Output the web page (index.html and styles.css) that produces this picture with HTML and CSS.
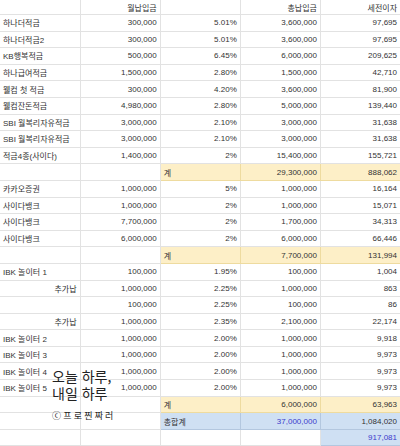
FILE: index.html
```html
<!DOCTYPE html>
<html lang="ko">
<head>
  <meta charset="UTF-8" />
  <meta name="viewport" content="width=device-width, initial-scale=1.0" />
  <title>적금 정리</title>
  <link rel="stylesheet" href="styles.css">
</head>
<body>
  <div class="sheet">
    <table>
      <tr class="head">
        <td></td><td class="num">월납입금</td><td></td><td class="num">총납입금</td><td class="num">세전이자</td>
      </tr>
      <tr><td>하나더적금</td><td class="num">300,000</td><td class="num">5.01%</td><td class="num">3,600,000</td><td class="num">97,695</td></tr>
      <tr><td>하나더적금2</td><td class="num">300,000</td><td class="num">5.01%</td><td class="num">3,600,000</td><td class="num">97,695</td></tr>
      <tr><td>KB행복적금</td><td class="num">500,000</td><td class="num">6.45%</td><td class="num">6,000,000</td><td class="num">209,625</td></tr>
      <tr><td>하나급여적금</td><td class="num">1,500,000</td><td class="num">2.80%</td><td class="num">1,500,000</td><td class="num">42,710</td></tr>
      <tr><td>웰컴 첫 적금</td><td class="num">300,000</td><td class="num">4.20%</td><td class="num">3,600,000</td><td class="num">81,900</td></tr>
      <tr><td>웰컴잔돈적금</td><td class="num">4,980,000</td><td class="num">2.80%</td><td class="num">5,000,000</td><td class="num">139,440</td></tr>
      <tr><td>SBI 월복리자유적금</td><td class="num">3,000,000</td><td class="num">2.10%</td><td class="num">3,000,000</td><td class="num">31,638</td></tr>
      <tr><td>SBI 월복리자유적금</td><td class="num">3,000,000</td><td class="num">2.10%</td><td class="num">3,000,000</td><td class="num">31,638</td></tr>
      <tr><td>적금4종(사이다)</td><td class="num">1,400,000</td><td class="num">2%</td><td class="num">15,400,000</td><td class="num">155,721</td></tr>
      <tr class="sum"><td></td><td></td><td class="yellow">계</td><td class="yellow num">29,300,000</td><td class="yellow num">888,062</td></tr>
      <tr><td>카카오증권</td><td class="num">1,000,000</td><td class="num">5%</td><td class="num">1,000,000</td><td class="num">16,164</td></tr>
      <tr><td>사이다뱅크</td><td class="num">1,000,000</td><td class="num">2%</td><td class="num">1,000,000</td><td class="num">15,071</td></tr>
      <tr><td>사이다뱅크</td><td class="num">7,700,000</td><td class="num">2%</td><td class="num">1,700,000</td><td class="num">34,313</td></tr>
      <tr><td>사이다뱅크</td><td class="num">6,000,000</td><td class="num">2%</td><td class="num">6,000,000</td><td class="num">66,446</td></tr>
      <tr class="sum"><td></td><td></td><td class="yellow">계</td><td class="yellow num">7,700,000</td><td class="yellow num">131,994</td></tr>
      <tr><td>IBK 놀이터 1</td><td class="num">100,000</td><td class="num">1.95%</td><td class="num">100,000</td><td class="num">1,004</td></tr>
      <tr><td class="num">추가납</td><td class="num">1,000,000</td><td class="num">2.25%</td><td class="num">1,000,000</td><td class="num">863</td></tr>
      <tr><td></td><td class="num">100,000</td><td class="num">2.25%</td><td class="num">100,000</td><td class="num">86</td></tr>
      <tr><td class="num">추가납</td><td class="num">1,000,000</td><td class="num">2.35%</td><td class="num">2,100,000</td><td class="num">22,174</td></tr>
      <tr><td>IBK 놀이터 2</td><td class="num">1,000,000</td><td class="num">2.00%</td><td class="num">1,000,000</td><td class="num">9,918</td></tr>
      <tr><td>IBK 놀이터 3</td><td class="num">1,000,000</td><td class="num">2.00%</td><td class="num">1,000,000</td><td class="num">9,973</td></tr>
      <tr><td>IBK 놀이터 4</td><td class="num">1,000,000</td><td class="num">2.00%</td><td class="num">1,000,000</td><td class="num">9,973</td></tr>
      <tr><td>IBK 놀이터 5</td><td class="num">1,000,000</td><td class="num">2.00%</td><td class="num">1,000,000</td><td class="num">9,973</td></tr>
      <tr class="sum"><td></td><td></td><td class="yellow">계</td><td class="yellow num">6,000,000</td><td class="yellow num">63,963</td></tr>
      <tr><td></td><td></td><td class="blue">총합계</td><td class="blue num link">37,000,000</td><td class="blue num">1,084,020</td></tr>
      <tr><td></td><td></td><td></td><td></td><td class="blue num link">917,081</td></tr>
    </table>

    <div class="stamp">
      <div class="stamp-title">오늘 하루,<br>내일 하루</div>
      <div class="stamp-sign">ⓒ프로찐짜러</div>
    </div>
  </div>
</body>
</html>
```

FILE: styles.css
```css
* { margin: 0; padding: 0; box-sizing: border-box; }
body {
  font-family: "Liberation Sans", "Noto Sans CJK KR", Arial, sans-serif;
  background: white;
  color: #333;
}
.sheet {
  position: relative;
  width: 400px;
  height: 446px;
  overflow: hidden;
}
table {
  width: 401px;
  border-collapse: collapse;
  table-layout: fixed;
  font-size: 8px;
  margin-top: -1px;
}
td {
  width: 80px;
  height: 16.6px;
  border: 1px solid #e2e2e2;
  padding: 0 3px;
  white-space: nowrap;
  overflow: hidden;
  vertical-align: middle;
}
td:first-child {
  border-left: none;
}
.head td {
  height: 15px;
}
.num {
  text-align: right;
}
.yellow {
  background: #fdefc7;
  border-color: #eedb9f;
}
.blue {
  background: #cfe0f3;
  border-color: #b3c7df;
}
.link {
  color: #3b3bcc;
}
.stamp {
  position: absolute;
  left: 52px;
  top: 368px;
  color: #222;
  font-family: "Noto Sans CJK KR", sans-serif;
}
.stamp-title {
  font-size: 14px;
  line-height: 17px;
}
.stamp-sign {
  font-size: 9px;
  letter-spacing: 2.2px;
  margin-top: 7px;
}
```
